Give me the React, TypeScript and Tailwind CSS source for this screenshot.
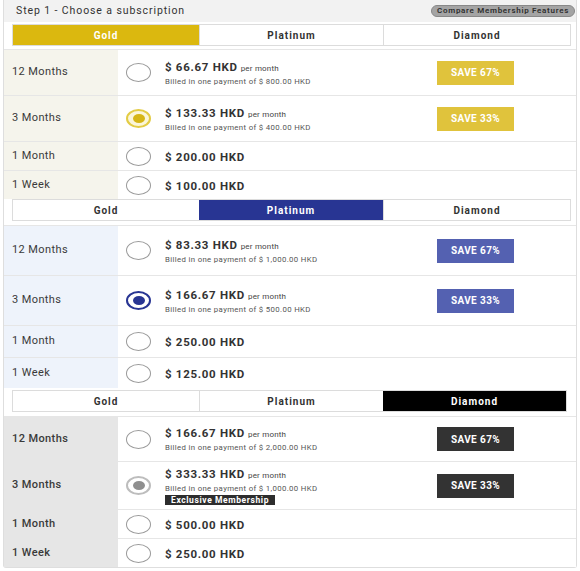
import React from "react";

type Theme = {
  name: "Gold" | "Platinum" | "Diamond";
  tabActive: string;
  leftBg: string;
  save: string;
  labelWeight: string;
};

type Row = {
  label: string;
  price: string;
  perMonth?: boolean;
  billed?: string;
  save?: string;
  selected?: boolean;
  exclusive?: boolean;
  h: string;
};

function Radio({ theme, selected }: { theme: Theme["name"]; selected?: boolean }) {
  if (!selected) {
    return <div className="w-[25px] h-[19px] rounded-[50%] border border-[#9a9a9a] bg-white shrink-0" />;
  }
  if (theme === "Gold") {
    return (
      <div className="w-[25px] h-[19px] rounded-[50%] border-2 border-[#e3cc45] bg-[#fbf6d9] flex items-center justify-center shrink-0">
        <div className="w-[12px] h-[9px] rounded-[50%] bg-[#d6b616]" />
      </div>
    );
  }
  if (theme === "Platinum") {
    return (
      <div className="w-[25px] h-[19px] rounded-[50%] border-2 border-[#283593] bg-white flex items-center justify-center shrink-0">
        <div className="w-[12px] h-[9px] rounded-[50%] bg-[#283593]" />
      </div>
    );
  }
  return (
    <div className="w-[25px] h-[19px] rounded-[50%] border-2 border-[#bdbdbd] bg-white flex items-center justify-center shrink-0">
      <div className="w-[12px] h-[9px] rounded-[50%] bg-[#8f8f8f]" />
    </div>
  );
}

function Tabs({ active, mt, right }: { active: Theme; mt: string; right: string }) {
  const names: Theme["name"][] = ["Gold", "Platinum", "Diamond"];
  return (
    <div className={`${mt} ml-[8px] ${right} h-[22px] flex border border-[#dcdcdc] bg-white`}>
      {names.map((n, i) => (
        <div
          key={n}
          className={`${i === 0 ? "w-[186px]" : i === 1 ? "w-[184px]" : "flex-1"} flex items-center justify-center text-[10px] font-bold tracking-[1px] ${
            n === active.name ? `${active.tabActive} text-white` : "text-[#333] " + (i > 0 ? "border-l border-[#dcdcdc]" : "")
          }`}
        >
          {n}
        </div>
      ))}
    </div>
  );
}

function Section({ theme, rows, tabsMt, gap, right }: { theme: Theme; rows: Row[]; tabsMt: string; gap: string; right: string }) {
  return (
    <div>
      <Tabs active={theme} mt={tabsMt} right={right} />
      <div className={gap} />
      <div className="border-t border-[#e6e6e6]">
        {rows.map((r, i) => (
          <div key={i} className={`flex ${r.h} ${i < rows.length - 1 ? "border-b border-[#e6e6e6]" : ""}`}>
            <div className={`w-[114px] ${theme.leftBg} flex items-center pl-[8px] text-[11px] tracking-[0.4px] text-[#3a3a3a] ${theme.labelWeight}`}>
              {r.label}
            </div>
            <div className="flex-1 flex items-center bg-white">
              <div className="ml-[8px] w-[39px]">
                <Radio theme={theme.name} selected={r.selected} />
              </div>
              <div className="flex-1 flex flex-col justify-center">
                <div className="text-[#333] leading-[12px]">
                  <span className="text-[11.5px] font-bold tracking-[0.7px]">{r.price}</span>
                  {r.perMonth && <span className="text-[8px] text-[#444] ml-[3px] tracking-[0.2px]">per month</span>}
                </div>
                {r.billed && (
                  <div className="text-[7.8px] text-[#555] mt-[2px] leading-[9px] tracking-[0.35px]">{r.billed}</div>
                )}
                {r.exclusive && (
                  <div className="mt-[2px] self-start bg-[#2d2d2d] text-white text-[8.5px] font-bold px-[6px] leading-[10px] tracking-[0.6px]">
                    Exclusive Membership
                  </div>
                )}
              </div>
              {r.save && (
                <div className={`mr-[62px] w-[77px] h-[24px] ${theme.save} text-white text-[10px] font-bold flex items-center justify-center tracking-[0.4px]`}>
                  {r.save}
                </div>
              )}
            </div>
          </div>
        ))}
      </div>
    </div>
  );
}

const gold: Theme = { name: "Gold", tabActive: "bg-[#dbb80f]", leftBg: "bg-[#f5f4ec]", save: "bg-[#e0c33c]", labelWeight: "font-normal" };
const plat: Theme = { name: "Platinum", tabActive: "bg-[#283593]", leftBg: "bg-[#eef3fb]", save: "bg-[#5461b1]", labelWeight: "font-normal" };
const dia: Theme = { name: "Diamond", tabActive: "bg-black", leftBg: "bg-[#e6e6e6]", save: "bg-[#333333]", labelWeight: "font-medium" };

export default function App() {
  return (
    <div className="w-[580px] h-[571px] bg-white overflow-hidden" style={{ fontFamily: "Roboto, 'Open Sans', sans-serif" }}>
      <div className="mx-[3px] border-x border-b border-[#dedede] rounded-b-[3px]">
        <div className="h-[22px] bg-[#f2f2f2] flex items-center justify-between pl-[12px] pr-[1px]">
          <div className="text-[10.5px] text-[#333] tracking-[0.9px]">Step 1 - Choose a subscription</div>
          <div className="h-[12px] px-[5px] rounded-full bg-[#a4a4a4] border border-[#888] text-[8px] font-semibold text-[#2e2e2e] flex items-center tracking-[0.7px]">
            Compare Membership Features
          </div>
        </div>
        <Section
          theme={gold}
          tabsMt="mt-[2px]"
          gap="h-[3px]"
          right="mr-[5px]"
          rows={[
            { label: "12 Months", price: "$ 66.67 HKD", perMonth: true, billed: "Billed in one payment of $ 800.00 HKD", save: "SAVE 67%", h: "h-[46px]" },
            { label: "3 Months", price: "$ 133.33 HKD", perMonth: true, billed: "Billed in one payment of $ 400.00 HKD", save: "SAVE 33%", selected: true, h: "h-[46px]" },
            { label: "1 Month", price: "$ 200.00 HKD", h: "h-[29px]" },
            { label: "1 Week", price: "$ 100.00 HKD", h: "h-[28px]" },
          ]}
        />
        <Section
          theme={plat}
          tabsMt="mt-0"
          gap="h-[4px]"
          right="mr-[5px]"
          rows={[
            { label: "12 Months", price: "$ 83.33 HKD", perMonth: true, billed: "Billed in one payment of $ 1,000.00 HKD", save: "SAVE 67%", h: "h-[50px]" },
            { label: "3 Months", price: "$ 166.67 HKD", perMonth: true, billed: "Billed in one payment of $ 500.00 HKD", save: "SAVE 33%", selected: true, h: "h-[50px]" },
            { label: "1 Month", price: "$ 250.00 HKD", h: "h-[32px]" },
            { label: "1 Week", price: "$ 125.00 HKD", h: "h-[30px]" },
          ]}
        />
        <Section
          theme={dia}
          tabsMt="mt-[2px]"
          gap="h-[4px]"
          right="mr-[9px]"
          rows={[
            { label: "12 Months", price: "$ 166.67 HKD", perMonth: true, billed: "Billed in one payment of $ 2,000.00 HKD", save: "SAVE 67%", h: "h-[45px]" },
            { label: "3 Months", price: "$ 333.33 HKD", perMonth: true, billed: "Billed in one payment of $ 1,000.00 HKD", save: "SAVE 33%", selected: true, exclusive: true, h: "h-[48px]" },
            { label: "1 Month", price: "$ 500.00 HKD", h: "h-[29px]" },
            { label: "1 Week", price: "$ 250.00 HKD", h: "h-[28px]" },
          ]}
        />
      </div>
    </div>
  );
}
